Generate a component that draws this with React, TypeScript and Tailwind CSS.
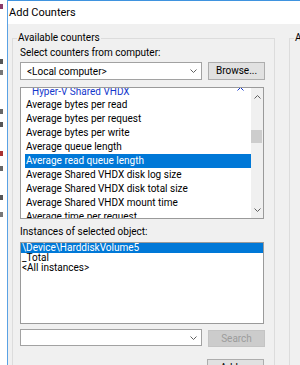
import React from 'react';

const counters = [
  'Average bytes per read',
  'Average bytes per request',
  'Average bytes per write',
  'Average queue length',
  'Average read queue length',
  'Average Shared VHDX disk log size',
  'Average Shared VHDX disk total size',
  'Average Shared VHDX mount time',
  'Average time per request',
];
const selectedCounter = 'Average read queue length';

const instances = ['\\Device\\HarddiskVolume5', '_Total', '<All instances>'];

// bits of the window behind the dialog
const peeks = [
  { mt: 'mt-[4px]', c: 'bg-[#8a3a6a]' },
  { mt: 'mt-[50px]', c: 'bg-[#555]' },
  { mt: 'mt-[6px]', c: 'bg-[#777]' },
  { mt: 'mt-[34px]', c: 'bg-[#666]' },
  { mt: 'mt-[8px]', c: 'bg-[#555]' },
  { mt: 'mt-[24px]', c: 'bg-[#a33]' },
  { mt: 'mt-[10px]', c: 'bg-[#666]' },
  { mt: 'mt-[24px]', c: 'bg-[#555]' },
  { mt: 'mt-[12px]', c: 'bg-[#777]' },
];

const Chevron: React.FC<{ up?: boolean; className?: string }> = ({ up, className }) => (
  <svg width="7" height="4" viewBox="0 0 7 4" className={className}>
    <path
      d={up ? 'M0.5 3.5 L3.5 0.5 L6.5 3.5' : 'M0.5 0.5 L3.5 3.5 L6.5 0.5'}
      fill="none"
      stroke="currentColor"
      strokeWidth="1"
    />
  </svg>
);

export default function App() {
  return (
    <div className="w-[300px] h-[365px] overflow-hidden flex bg-white text-[10px] text-black font-[Roboto,'Noto_Sans',sans-serif]">
      {/* background window */}
      <div className="w-[7px] shrink-0 flex flex-col items-start bg-white">
        {peeks.map((p, i) => (
          <div key={i} className={`${p.mt} ${p.c} w-[3px] h-[5px]`} />
        ))}
      </div>
      <div className="w-px shrink-0 bg-[#5aa2e4]" />

      {/* dialog */}
      <div className="flex-1 min-w-0 flex flex-col border-t border-[#3f93df]">
        <div className="h-[23px] shrink-0 bg-white flex items-center pl-px pt-px text-[11px]">Add Counters</div>

        <div className="flex-1 min-h-0 bg-[#f0f0f0] flex items-start pl-1 pt-2">
          {/* Available counters */}
          <fieldset className="w-[261px] shrink-0 border border-[#dcdcdc] pl-[7px] pr-[9px] pt-[3px] pb-4">
            <legend className="-ml-[3px] px-px leading-[12px]">Available counters</legend>

            <div className="leading-[12px]">Select counters from computer:</div>
            <div className="mt-[3px] flex gap-[6px]">
              <div className="w-[182px] h-[18px] border border-[#a2a2a2] bg-white flex items-center justify-between pl-[6px] pr-[4px]">
                <span>&lt;Local computer&gt;</span>
                <Chevron className="text-[#606060]" />
              </div>
              <button className="w-[57px] h-[18px] border border-[#adadad] bg-[#e1e1e1] flex items-center justify-center leading-none">
                Browse...
              </button>
            </div>

            {/* counter tree */}
            <div className="mt-[7px] w-[244px] h-[132px] border border-[#9a9a9a] bg-white flex">
              <div className="flex-1 min-w-0 overflow-hidden">
                <div className="-mt-[4px] ml-[4px]">
                  <div className="h-[14px] flex items-center justify-between pl-[7px] pr-[7px] text-[#1438cc]">
                    <span>Hyper-V Shared VHDX</span>
                    <Chevron up className="-mt-[5px]" />
                  </div>
                  {counters.map((c) => (
                    <div
                      key={c}
                      className={`h-[14px] leading-[14px] pl-px whitespace-nowrap ${
                        c === selectedCounter ? 'bg-[#0078d7] text-white' : ''
                      }`}
                    >
                      {c}
                    </div>
                  ))}
                </div>
              </div>
              {/* scrollbar */}
              <div className="w-[12px] shrink-0 bg-[#f0f0f0] flex flex-col">
                <div className="h-[17px] flex items-center justify-center text-[#606060]">
                  <Chevron up />
                </div>
                <div className="flex-1">
                  <div className="mt-[25px] h-[13px] w-[11px] bg-[#cdcdcd]" />
                </div>
                <div className="h-[17px] flex items-center justify-center text-[#606060]">
                  <Chevron />
                </div>
              </div>
            </div>

            <div className="mt-[7px] leading-[12px]">Instances of selected object:</div>
            <div className="mt-[4px] w-[244px] h-[82px] border border-[#9a9a9a] bg-white">
              {instances.map((c, i) => (
                <div
                  key={c}
                  className={`h-[10px] leading-[10px] pl-px whitespace-nowrap ${
                    i === 0 ? 'bg-[#0078d7] text-white' : ''
                  }`}
                >
                  {c}
                </div>
              ))}
            </div>

            <div className="mt-[5px] flex gap-[6px]">
              <div className="w-[182px] h-[17px] border border-[#a2a2a2] bg-white flex items-center justify-end pr-[4px]">
                <Chevron className="text-[#606060]" />
              </div>
              <button className="mt-px w-[57px] h-[17px] border border-[#c4c4c4] bg-[#cccccc] text-[#9c9c9c] flex items-center justify-center leading-none">
                Search
              </button>
            </div>

            <div className="mt-[12px] flex justify-end pr-px">
              <button className="w-[57px] h-[18px] border border-[#adadad] bg-[#e1e1e1] flex items-center justify-center leading-none">
                Add &gt;&gt;
              </button>
            </div>
          </fieldset>

          {/* Added counters */}
          <fieldset className="ml-[14px] w-[200px] shrink-0 border border-[#dcdcdc] pl-[7px] pt-[3px] pb-4">
            <legend className="-ml-[3px] px-px leading-[12px] whitespace-nowrap">Added counters</legend>
            <div className="mt-[3px] ml-[3px] h-[303px] border border-[#9a9a9a] bg-white" />
            <button className="mt-[3px] ml-[3px] w-[57px] h-[18px] border border-[#adadad] bg-[#e1e1e1]" />
          </fieldset>
        </div>
      </div>
    </div>
  );
}
